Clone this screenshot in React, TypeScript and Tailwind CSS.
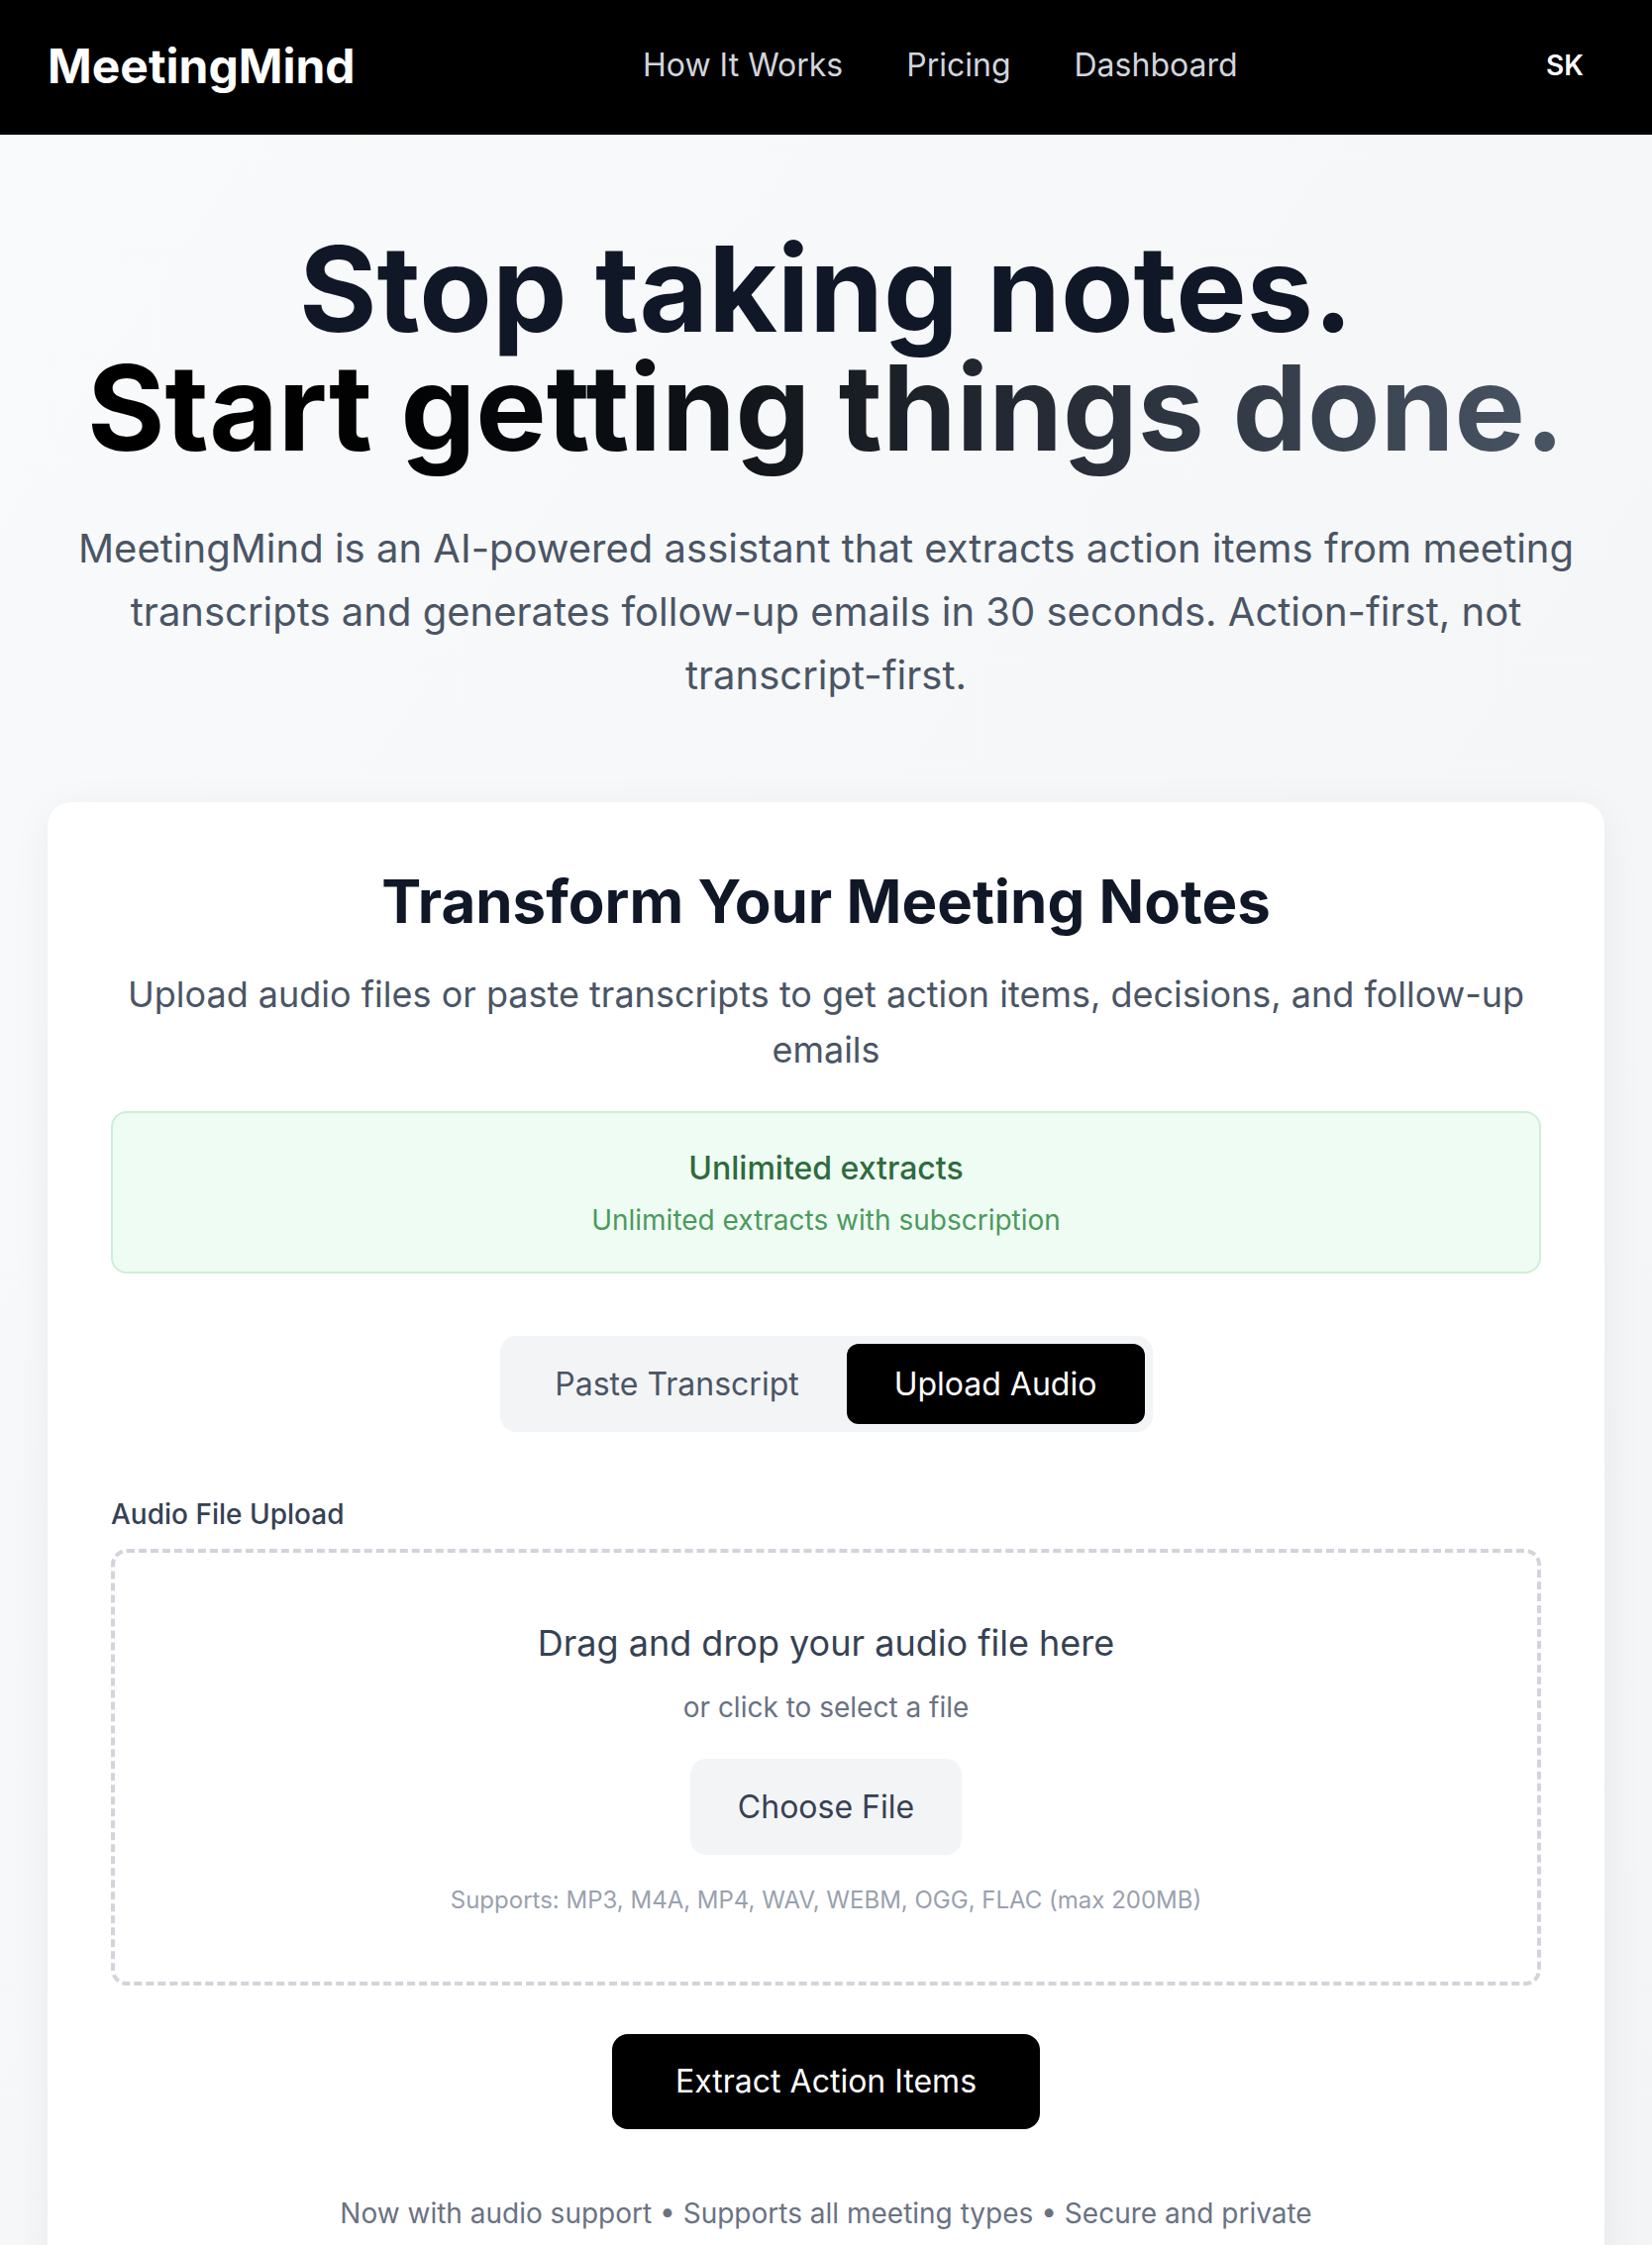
import React from 'react';

const NavBar: React.FC = () => (
  <header className="bg-black h-[136px] px-[48px] flex items-center justify-between">
    <span className="text-white text-[48px] font-bold mb-[2px]">MeetingMind</span>
    <nav className="flex items-center gap-[64px] text-[32px] text-gray-300 mb-[4px]">
      <a>How It Works</a>
      <a>Pricing</a>
      <a>Dashboard</a>
    </nav>
    <div className="w-[80px] h-[80px] rounded-full bg-black flex items-center justify-center text-white text-[28px] font-semibold mb-[4px]">
      SK
    </div>
  </header>
);

const Hero: React.FC = () => (
  <section className="pt-[96px] pb-[96px] px-[48px] text-center">
    <h1 className="text-[120px] leading-[120px] font-bold text-gray-900">
      Stop taking notes.
      <br />
      <span className="bg-gradient-to-r from-black to-gray-600 bg-clip-text text-transparent">
        Start getting things done.
      </span>
    </h1>
    <p className="mt-[50px] mx-auto max-w-[1536px] text-[40px] leading-[64px] text-gray-600">
      MeetingMind is an AI-powered assistant that extracts action items from meeting transcripts and generates follow-up emails in 30 seconds. Action-first, not transcript-first.
    </p>
  </section>
);

const UploadCard: React.FC = () => (
  <div className="bg-white rounded-[24px] shadow-[0_8px_40px_rgba(0,0,0,0.06)] p-[64px] text-center">
    <h2 className="text-[60px] leading-[72px] font-bold text-gray-900">
      Transform Your Meeting Notes
    </h2>
    <p className="mt-[30px] text-[36px] leading-[56px] text-gray-600">
      Upload audio files or paste transcripts to get action items, decisions, and follow-up emails
    </p>

    {/* Plan banner */}
    <div className="mt-[34px] rounded-[16px] border-2 border-[#ccefd6] bg-[#effcf3] p-[32px]">
      <p className="text-[32px] leading-[48px] font-medium text-[#2e6b3d]">Unlimited extracts</p>
      <p className="mt-[8px] text-[28px] leading-[40px] text-[#4c9a5d]">Unlimited extracts with subscription</p>
    </div>

    {/* Mode tabs */}
    <div className="mt-[63px] flex justify-center">
      <div className="inline-flex p-[8px] bg-gray-100 rounded-[16px]">
        <button className="w-[342px] h-[81px] rounded-[12px] text-[32px] text-gray-600">Paste Transcript</button>
        <button className="w-[301px] h-[81px] rounded-[12px] bg-black text-white text-[32px]">Upload Audio</button>
      </div>
    </div>

    {/* Upload area */}
    <div className="mt-[63px] text-left">
      <label className="block text-[28px] leading-[40px] font-medium text-gray-700 mb-[15px]">Audio File Upload</label>
      <div className="border-[4px] border-dashed border-[#d1d5db] rounded-[16px] px-[64px] pt-[63px] pb-[66px] text-center">
        <p className="text-[36px] leading-[56px] text-gray-700">Drag and drop your audio file here</p>
        <p className="mt-[17px] text-[28px] leading-[40px] text-gray-500">or click to select a file</p>
        <button className="mt-[32px] h-[97px] px-[48px] rounded-[16px] bg-gray-100 text-[32px] text-gray-700">
          Choose File
        </button>
        <p className="mt-[30px] text-[24px] leading-[32px] text-gray-400">
          Supports: MP3, M4A, MP4, WAV, WEBM, OGG, FLAC (max 200MB)
        </p>
      </div>
    </div>

    <button className="mt-[49px] h-[96px] px-[64px] rounded-[16px] bg-black text-white text-[32px]">
      Extract Action Items
    </button>

    <p className="mt-[65px] text-[28px] leading-[40px] text-gray-500">
      Now with audio support • Supports all meeting types • Secure and private
    </p>
  </div>
);

export default function App() {
  return (
    <div className="min-h-screen bg-gradient-to-br from-gray-50 to-gray-100 font-['Inter',sans-serif]">
      <NavBar />
      <Hero />
      <main className="px-[48px] pb-[96px]">
        <UploadCard />
      </main>
    </div>
  );
}
